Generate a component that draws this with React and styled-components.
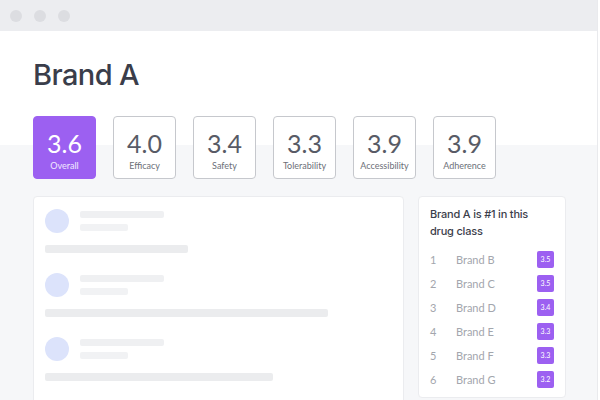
import React from 'react';
import styled, { createGlobalStyle } from 'styled-components';

const GlobalStyle = createGlobalStyle`
  html, body {
    margin: 0;
    padding: 0;
    background: #ffffff;
  }
  body {
    width: 600px;
    height: 400px;
    overflow: hidden;
    font-family: Lato, "Noto Sans", sans-serif;
  }
`

const Window = styled.div`
  width: 597px;
  height: 400px;
  border-right: 1px solid #e9eaed;
  display: flex;
  flex-direction: column;
  overflow: hidden;
`
const TitleBar = styled.div`
  height: 31px;
  flex-shrink: 0;
  background: #ecedf0;
  display: flex;
  align-items: center;
  padding-left: 10px;
  gap: 12px;
`
const Dot = styled.span`
  width: 12px;
  height: 12px;
  border-radius: 50%;
  background: #dcdde1;
`
const Content = styled.div`
  flex: 1;
  padding: 26px 0 0 33px;
  background: linear-gradient(#ffffff 0, #ffffff 114px, #f6f7f9 114px);
`
const Title = styled.h1`
  margin: 0;
  font-family: Inter, Lato, sans-serif;
  font-size: 29px;
  line-height: 36px;
  font-weight: 500;
  letter-spacing: -0.6px;
  color: #3a3d4a;
`
const Scores = styled.div`
  display: flex;
  gap: 17px;
  margin-top: 23px;
`
const ScoreCard = styled.div`
  width: 63px;
  height: 63px;
  box-sizing: border-box;
  border-radius: 4px;
  padding-top: 13px;
  display: flex;
  flex-direction: column;
  align-items: center;
  background: ${p => (p.$active ? '#9c60f1' : '#ffffff')};
  border: 1.5px solid ${p => (p.$active ? '#9c60f1' : '#c6c8cd')};
  color: ${p => (p.$active ? '#ffffff' : '#585b66')};
`
const ScoreValue = styled.div`
  font-size: 25px;
  line-height: 28px;
  margin-top: -1.5px;
`
const ScoreLabel = styled.div`
  font-size: 9px;
  line-height: 12px;
  margin-top: 3px;
  color: ${p => (p.$active ? '#f1e8ff' : '#6c6f78')};
`
const Panels = styled.div`
  display: flex;
  align-items: flex-start;
  gap: 14px;
  margin-top: 17px;
`
const Feed = styled.div`
  width: 371px;
  height: 240px;
  box-sizing: border-box;
  background: #ffffff;
  border: 1px solid #ebecef;
  border-radius: 4px;
  padding: 12px 0 0 11px;
  display: flex;
  flex-direction: column;
  gap: 20px;
`
const Post = styled.div`
  display: flex;
  flex-direction: column;
  gap: 12px;
`
const PostHead = styled.div`
  display: flex;
  gap: 11px;
`
const Avatar = styled.div`
  width: 24px;
  height: 24px;
  border-radius: 50%;
  background: #dce3fb;
`
const Lines = styled.div`
  display: flex;
  flex-direction: column;
  gap: 6px;
  padding-top: 2px;
`
const Bar = styled.div`
  height: ${p => p.$h || 7}px;
  width: ${p => p.$w}px;
  border-radius: 2px;
  background: ${p => p.$c || '#f0f1f3'};
`
const Ranking = styled.div`
  width: 148px;
  height: 202px;
  box-sizing: border-box;
  background: #ffffff;
  border: 1px solid #ebecef;
  border-radius: 4px;
  padding: 9px 11px 0 11px;
`
const RankTitle = styled.div`
  max-width: 100px;
  font-family: Inter, Lato, sans-serif;
  font-size: 11px;
  line-height: 17px;
  font-weight: 500;
  letter-spacing: -0.2px;
  color: #3b3e4b;
  margin-bottom: 7px;
`
const Row = styled.div`
  height: 24px;
  display: flex;
  align-items: center;
  font-size: 11px;
  color: #a3a6ad;
`
const Rank = styled.span`
  width: 26px;
`
const Name = styled.span`
  flex: 1;
`
const Badge = styled.span`
  width: 17px;
  height: 17px;
  border-radius: 2px;
  background: #9c60f1;
  color: #ffffff;
  font-size: 7px;
  display: flex;
  align-items: center;
  justify-content: center;
`

const scores = [
  { value: '3.6', label: 'Overall', active: true },
  { value: '4.0', label: 'Efficacy' },
  { value: '3.4', label: 'Safety' },
  { value: '3.3', label: 'Tolerability' },
  { value: '3.9', label: 'Accessibility' },
  { value: '3.9', label: 'Adherence' },
]

const posts = [143, 283, 228]

const brands = [
  ['Brand B', '3.5'],
  ['Brand C', '3.5'],
  ['Brand D', '3.4'],
  ['Brand E', '3.3'],
  ['Brand F', '3.3'],
  ['Brand G', '3.2'],
]

const App = () => {
  return (
    <>
      <GlobalStyle />
      <Window>
        <TitleBar>
          <Dot />
          <Dot />
          <Dot />
        </TitleBar>
        <Content>
          <Title>Brand A</Title>
          <Scores>
            {scores.map((s) => (
              <ScoreCard key={s.label} $active={s.active}>
                <ScoreValue>{s.value}</ScoreValue>
                <ScoreLabel $active={s.active}>{s.label}</ScoreLabel>
              </ScoreCard>
            ))}
          </Scores>
          <Panels>
            <Feed>
              {posts.map((w, i) => (
                <Post key={i}>
                  <PostHead>
                    <Avatar />
                    <Lines>
                      <Bar $w={84} $c="#eff0f2" />
                      <Bar $w={48} $c="#f1f2f4" />
                    </Lines>
                  </PostHead>
                  <Bar $w={w} $h={8} $c="#ebecee" />
                </Post>
              ))}
            </Feed>
            <Ranking>
              <RankTitle>Brand A is #1 in this drug class</RankTitle>
              {brands.map(([name, score], i) => (
                <Row key={name}>
                  <Rank>{i + 1}</Rank>
                  <Name>{name}</Name>
                  <Badge>{score}</Badge>
                </Row>
              ))}
            </Ranking>
          </Panels>
        </Content>
      </Window>
    </>
  )
}

export default App
